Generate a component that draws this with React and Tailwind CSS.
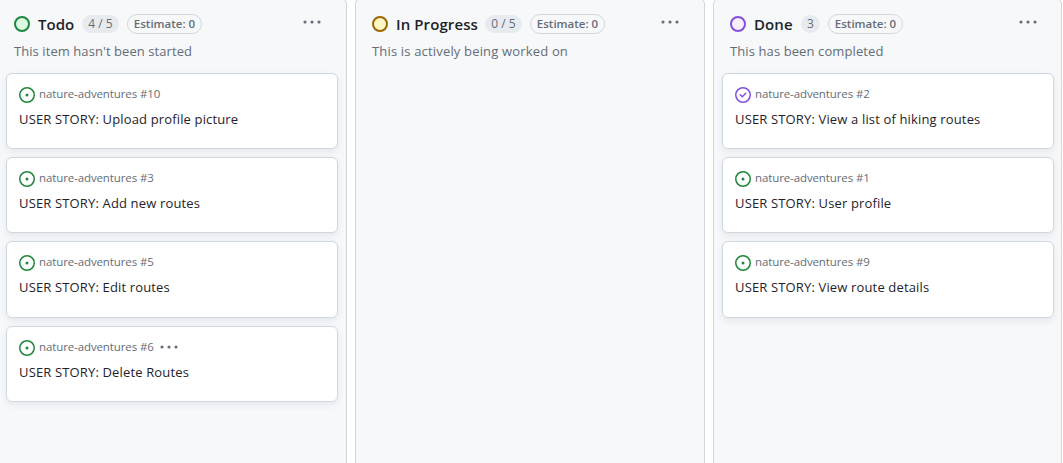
import React from "react";

const columns = [
  {
    name: "Todo", width: "w-[350px] pr-2", nameClass: "w-9 tracking-[0.05px]", count: "4 / 5", countClass: "w-[37px]",
    ring: "border-[#1f883d] bg-[#dafbe1]", description: "This item hasn't been started", descriptionClass: "tracking-[0.07px]",
    cards: [
      { n: 10, title: "Upload profile picture" },
      { n: 3, title: "Add new routes" },
      { n: 5, title: "Edit routes" },
      { n: 6, title: "Delete Routes", menu: true },
    ],
  },
  {
    name: "In Progress", width: "w-[350px] pr-2", nameClass: "w-[81px] tracking-[0.1px]", count: "0 / 5", countClass: "w-[37px]",
    ring: "border-[#9a6700] bg-[#fff8c5]", description: "This is actively being worked on", descriptionClass: "tracking-[0.17px]",
    cards: [],
  },
  {
    name: "Done", width: "w-[349px] pr-[7px]", nameClass: "w-[39px] tracking-[0.1px]", count: "3", countClass: "w-[19px]",
    ring: "border-[#8250df] bg-[#fbefff]", description: "This has been completed", descriptionClass: "tracking-[0.1px]",
    cards: [
      { n: 2, title: "View a list of hiking routes", closed: true },
      { n: 1, title: "User profile" },
      { n: 9, title: "View route details" },
    ],
  },
];

function Dots({ className }) {
  return (
    <svg viewBox="0 0 18 4" className={className} fill="currentColor" aria-hidden="true">
      <circle cx="2" cy="2" r="1.55" />
      <circle cx="9" cy="2" r="1.55" />
      <circle cx="16" cy="2" r="1.55" />
    </svg>
  );
}

function IssueIcon({ closed }) {
  return closed ? (
    <svg viewBox="0 0 16 16" className="size-4 shrink-0 text-[#8250df]" fill="currentColor">
      <path d="M11.28 6.78a.75.75 0 0 0-1.06-1.06L7.25 8.69 5.78 7.22a.75.75 0 0 0-1.06 1.06l2 2a.75.75 0 0 0 1.06 0l3.5-3.5Z" />
      <path d="M16 8A8 8 0 1 1 0 8a8 8 0 0 1 16 0Zm-1.5 0a6.5 6.5 0 1 0-13 0 6.5 6.5 0 0 0 13 0Z" />
    </svg>
  ) : (
    <svg viewBox="0 0 16 16" className="size-4 shrink-0 text-[#1f883d]" fill="currentColor">
      <path d="M8 9.5a1.5 1.5 0 1 0 0-3 1.5 1.5 0 0 0 0 3Z" />
      <path d="M8 0a8 8 0 1 1 0 16A8 8 0 0 1 8 0ZM1.5 8a6.5 6.5 0 1 0 13 0 6.5 6.5 0 0 0-13 0Z" />
    </svg>
  );
}

function Card({ card }) {
  return (
    <article className="h-[76.33px] shrink-0 rounded-md border border-[#d0d7de] bg-white px-3 pt-3 shadow-[0_3px_6px_rgba(140,149,159,0.15)]">
      <div className="flex h-[18px] items-start text-[#656d76]">
        <div className="mt-px"><IssueIcon closed={card.closed} /></div>
        <span className="ml-1 text-[11.5px] leading-4 tracking-[-0.11px] whitespace-nowrap">nature-adventures #{card.n}</span>
        {card.menu && <Dots className="ml-[6px] h-4 w-[18px]" />}
      </div>
      <h3 className="mt-[5px] text-[13px] leading-5 tracking-[0.15px] whitespace-nowrap text-[#1f2328]">USER STORY: {card.title}</h3>
    </article>
  );
}

function Column({ column }) {
  return (
    <section className={`flex shrink-0 flex-col rounded-md border border-[#d0d7de] bg-[#f6f8fa] pt-[15px] pl-2 ${column.width}`}>
      <header className="flex h-5 items-center pl-2 whitespace-nowrap">
        <span className={`size-4 shrink-0 rounded-full border-2 ${column.ring}`} />
        <h2 className={`ml-2 text-[15px] leading-5 font-[560] text-[#1f2328] ${column.nameClass}`}>{column.name}</h2>
        <span className={`ml-2 h-[18px] rounded-full bg-[#e7ebef] text-center text-xs leading-[18px] font-medium text-[#656d76] ${column.countClass}`}>{column.count}</span>
        <span className="ml-2 h-5 w-[75px] rounded-full border border-[#d0d7de] text-center text-[11.5px] leading-[18px] font-[560] text-[#656d76]">Estimate: 0</span>
        <Dots className="mr-[17px] mb-[5px] ml-auto h-4 w-[18px] text-[#656d76]" />
      </header>
      <p className={`mt-[7px] pl-2 text-[13px] leading-5 whitespace-nowrap text-[#656d76] ${column.descriptionClass}`}>{column.description}</p>
      <div className="mt-[11.7px] flex flex-col gap-2">
        {column.cards.map((card) => <Card key={card.n} card={card} />)}
      </div>
    </section>
  );
}

export default function App() {
  return (
    <main className="h-[463px] w-[1063px] overflow-hidden bg-white font-['Open_Sans','Noto_Sans',sans-serif]">
      <div className="-mt-[2px] -ml-[3px] flex h-[475px] w-[1070px] gap-2">
        {columns.map((column) => <Column key={column.name} column={column} />)}
      </div>
    </main>
  );
}
